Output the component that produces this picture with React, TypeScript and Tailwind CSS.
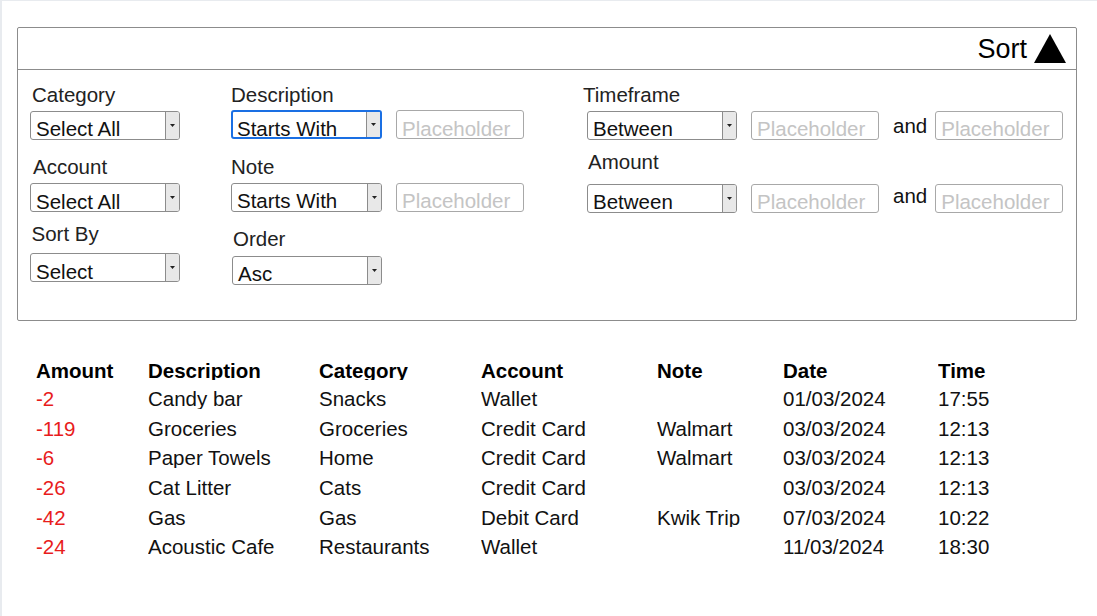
import clsx from 'clsx';

// Filter panel + transaction list, drawn with plain divs so the controls line up to the pixel.

interface Transaction {
    amount: number;
    description: string;
    category: string;
    account: string;
    note: string;
    date: string;
    time: string;
}

const transactions: Transaction[] = [
    { amount: -2, description: 'Candy bar', category: 'Snacks', account: 'Wallet', note: '', date: '01/03/2024', time: '17:55' },
    { amount: -119, description: 'Groceries', category: 'Groceries', account: 'Credit Card', note: 'Walmart', date: '03/03/2024', time: '12:13' },
    { amount: -6, description: 'Paper Towels', category: 'Home', account: 'Credit Card', note: 'Walmart', date: '03/03/2024', time: '12:13' },
    { amount: -26, description: 'Cat Litter', category: 'Cats', account: 'Credit Card', note: '', date: '03/03/2024', time: '12:13' },
    { amount: -42, description: 'Gas', category: 'Gas', account: 'Debit Card', note: 'Kwik Trip', date: '07/03/2024', time: '10:22' },
    { amount: -24, description: 'Acoustic Cafe', category: 'Restaurants', account: 'Wallet', note: '', date: '11/03/2024', time: '18:30' },
];

const headers = ['Amount', 'Description', 'Category', 'Account', 'Note', 'Date', 'Time'];

const gridCols = 'grid grid-cols-[112px_171px_162px_176px_126px_155px_1fr]';

function Label({ text, className }: { text: string; className?: string }) {
    return <div className={clsx('text-[20.5px] leading-[23px] text-[#222]', className)}>{text}</div>;
}

function SelectBox({ value, wide, focused, className }: { value: string; wide?: boolean; focused?: boolean; className?: string }) {
    return (
        <div
            className={clsx(
                'flex h-[29px] shrink-0 overflow-hidden rounded-[3px] bg-white',
                wide ? 'w-[151px]' : 'w-[150px]',
                focused ? 'border-2 border-[#1a6fe3]' : 'border border-[#8c8c8c]',
                className
            )}
        >
            <div className={clsx('flex-1 text-[20.5px] leading-[20px] text-[#111]', focused ? 'pl-[4px] pt-[6.5px]' : 'pl-[5px] pt-[7.5px]')}>
                {value}
            </div>
            <div className="flex w-[14px] items-center justify-center border-l border-[#8c8c8c] bg-[#e8e8e8]">
                <svg width="5" height="3" viewBox="0 0 5 3">
                    <polygon points="0,0 5,0 2.5,3" fill="#222" />
                </svg>
            </div>
        </div>
    );
}

function TextBox() {
    return (
        <div className="h-[29px] w-[128px] shrink-0 rounded-[3px] border border-[#a8a8a8] bg-white pl-[5px] pt-[7.5px] text-[20.5px] leading-[20px] text-[#c4c4c4]">
            Placeholder
        </div>
    );
}

function RangeRow({ andOffset, className }: { andOffset: string; className?: string }) {
    return (
        <div className={clsx('ml-[4px] flex items-start', className)}>
            <SelectBox value="Between" className="mr-[14px]" />
            <TextBox />
            <span className={clsx('ml-[14px] mr-[8px] text-[20.5px] leading-[20px] text-[#111]', andOffset)}>and</span>
            <TextBox />
        </div>
    );
}

export default function App() {
    return (
        <div className="min-h-screen border-l-2 border-t border-[#e8ebef] bg-white pb-10 font-['Liberation_Sans',Arial,sans-serif]">
            <div className="ml-[15px] mt-[26px] w-[1060px] rounded-[2px] border border-[#8c8c8c]">
                <div className="flex h-[42px] items-center justify-end gap-[7px] border-b border-[#8c8c8c] pr-[10px]">
                    <span className="text-[27px] leading-[30px] text-black">Sort</span>
                    <svg width="32" height="29" viewBox="0 0 32 29" className="mt-[-1px]">
                        <polygon points="16,0 32,29 0,29" fill="#000" />
                    </svg>
                </div>

                <div className="flex items-start pb-[35px] pl-[12px] pt-[13px]">
                    <div className="flex w-[150px] flex-col">
                        <Label text="Category" className="ml-[2px]" />
                        <SelectBox value="Select All" className="mt-[4.5px]" />
                        <Label text="Account" className="ml-[3px] mt-[15.5px]" />
                        <SelectBox value="Select All" className="mt-[5px]" />
                        <Label text="Sort By" className="ml-[1.5px] mt-[10px]" />
                        <SelectBox value="Select" className="mt-[8px]" />
                    </div>

                    <div className="ml-[51px] flex flex-col">
                        <Label text="Description" />
                        <div className="mt-[4px] flex items-start gap-[14px]">
                            <SelectBox value="Starts With" wide focused />
                            <TextBox />
                        </div>
                        <Label text="Note" className="mt-[15.5px]" />
                        <div className="mt-[5px] flex items-start gap-[14px]">
                            <SelectBox value="Starts With" wide />
                            <TextBox />
                        </div>
                        <Label text="Order" className="ml-[2px] mt-[15px]" />
                        <SelectBox value="Asc" className="ml-[1px] mt-[6px]" />
                    </div>

                    <div className="ml-[59px] flex flex-col">
                        <Label text="Timeframe" />
                        <RangeRow andOffset="mt-[5px]" className="mt-[4.5px]" />
                        <Label text="Amount" className="ml-[5px] mt-[10px]" />
                        <RangeRow andOffset="mt-[2px]" className="mt-[11px]" />
                    </div>
                </div>
            </div>

            <div className="mt-[40px] pl-[34px]">
                <div className={clsx(gridCols, 'h-[28.8px] items-start')}>
                    {headers.map(h => (
                        <div key={h} className="h-[19.5px] overflow-hidden text-[20.5px] font-bold leading-[20px] text-black">
                            {h}
                        </div>
                    ))}
                </div>
                {transactions.map((t, i) => (
                    <div key={i} className={clsx(gridCols, 'h-[29.6px] items-start text-[20.5px] leading-[20px] text-[#111]')}>
                        <div className="h-[19.5px] overflow-hidden text-[#e81c1c]">{t.amount}</div>
                        <div className="h-[19.5px] overflow-hidden">{t.description}</div>
                        <div className="h-[19.5px] overflow-hidden">{t.category}</div>
                        <div className="h-[19.5px] overflow-hidden">{t.account}</div>
                        <div className="h-[19.5px] overflow-hidden">{t.note}</div>
                        <div className="h-[19.5px] overflow-hidden">{t.date}</div>
                        <div className="h-[19.5px] overflow-hidden">{t.time}</div>
                    </div>
                ))}
            </div>
        </div>
    );
}
